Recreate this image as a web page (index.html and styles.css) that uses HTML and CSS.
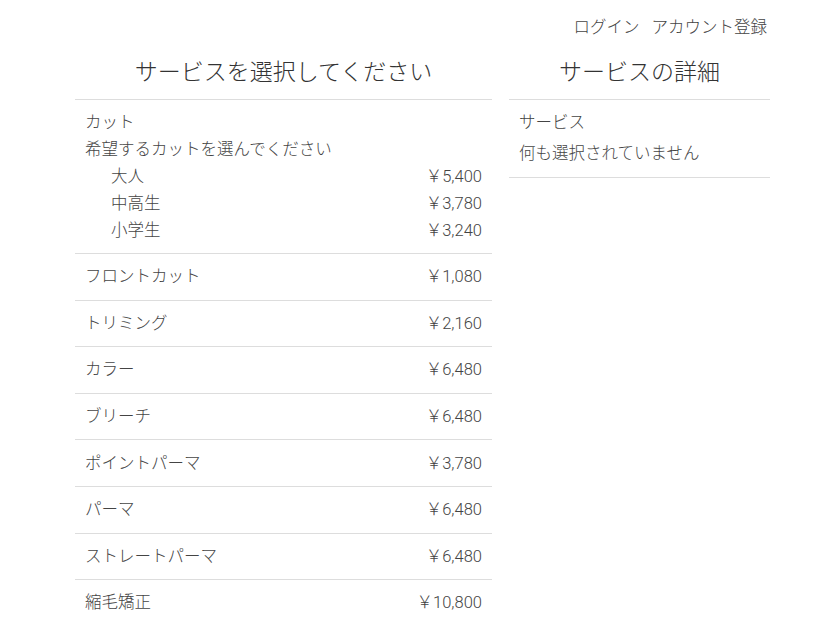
FILE: index.html
```html
<!DOCTYPE html>
<html lang="ja">
<head>
<meta charset="utf-8">
<title>サービス選択</title>
<link rel="stylesheet" href="styles.css">
</head>
<body>
<header class="topbar">
  <a class="toplink" href="#">ログイン</a>
  <a class="toplink" href="#">アカウント登録</a>
</header>
<main class="layout">
  <section class="col col-left">
    <h2 class="title">サービスを選択してください</h2>
    <ul class="list">
      <li class="row row-group">
        <div class="line">カット</div>
        <div class="line">希望するカットを選んでください</div>
        <div class="line sub"><span>大人</span><span class="price">￥5,400</span></div>
        <div class="line sub"><span>中高生</span><span class="price">￥3,780</span></div>
        <div class="line sub"><span>小学生</span><span class="price">￥3,240</span></div>
      </li>
      <li class="row"><span>フロントカット</span><span class="price">￥1,080</span></li>
      <li class="row"><span>トリミング</span><span class="price">￥2,160</span></li>
      <li class="row"><span>カラー</span><span class="price">￥6,480</span></li>
      <li class="row"><span>ブリーチ</span><span class="price">￥6,480</span></li>
      <li class="row"><span>ポイントパーマ</span><span class="price">￥3,780</span></li>
      <li class="row"><span>パーマ</span><span class="price">￥6,480</span></li>
      <li class="row"><span>ストレートパーマ</span><span class="price">￥6,480</span></li>
      <li class="row"><span>縮毛矯正</span><span class="price">￥10,800</span></li>
    </ul>
  </section>
  <section class="col col-right">
    <h2 class="title">サービスの詳細</h2>
    <div class="detail">
      <div class="detail-label">サービス</div>
      <div class="detail-value">何も選択されていません</div>
    </div>
  </section>
</main>
</body>
</html>
```
FILE: styles.css
```css
* { box-sizing: border-box; }
html, body { margin: 0; padding: 0; background: #fff; }
body {
  font-family: Roboto, "Noto Sans CJK JP", sans-serif;
  font-weight: 300;
  font-size: 16.5px;
  color: #444;
}
.topbar {
  display: flex;
  justify-content: flex-end;
  gap: 12px;
  height: 40px;
  padding: 16px 53px 0 0;
  line-height: 24px;
}
.toplink {
  color: #444;
  text-decoration: none;
  font-size: 16.5px;
}
.layout {
  display: flex;
  gap: 17px;
  padding-left: 75px;
}
.col-left { width: 417px; }
.col-right { width: 261px; }
.title {
  margin: 7px 0 6px;
  line-height: 46px;
  font-size: 23px;
  font-weight: 300;
  text-align: center;
  color: #333;
  font-family: "Noto Sans CJK JP", serif;
}
.list {
  list-style: none;
  margin: 0;
  padding: 0;
  border-top: 1px solid #ddd;
}
.row {
  display: flex;
  justify-content: space-between;
  padding: 9.3px 10px;
  line-height: 27px;
  border-bottom: 1px solid #ddd;
}
.row-group { display: block; padding: 9px 10px; }
.line { display: flex; justify-content: space-between; }
.sub { padding-left: 26px; }
.detail {
  border-top: 1px solid #ddd;
  border-bottom: 1px solid #ddd;
  padding: 9px 10px 10px;
  line-height: 27px;
}
.detail-value { margin-top: 4px; }
```
